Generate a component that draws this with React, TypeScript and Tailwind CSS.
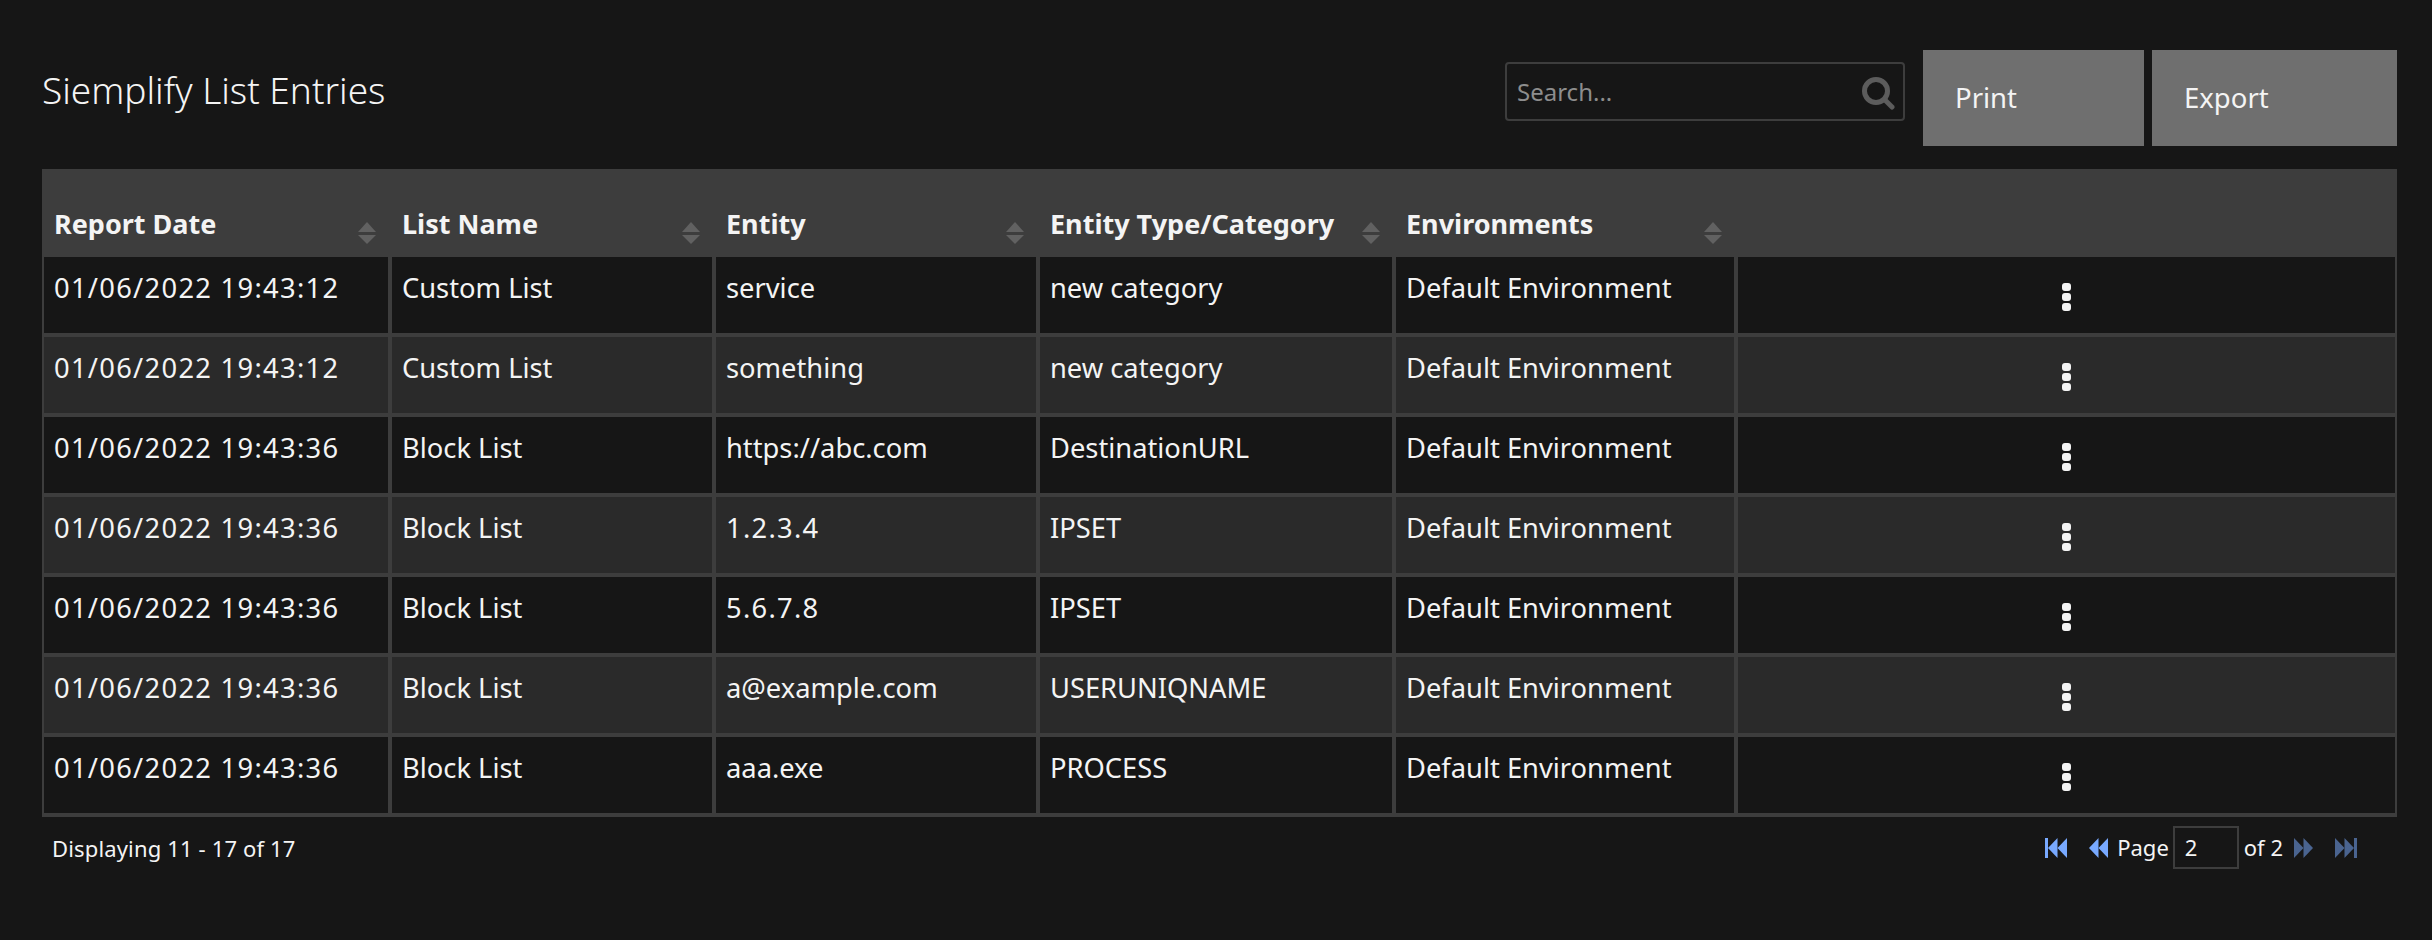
const font = "font-['Noto_Sans','Liberation_Sans',sans-serif]";

const rows = [
    ["01/06/2022 19:43:12", "Custom List", "service", "new category"],
    ["01/06/2022 19:43:12", "Custom List", "something", "new category"],
    ["01/06/2022 19:43:36", "Block List", "https://abc.com", "DestinationURL"],
    ["01/06/2022 19:43:36", "Block List", "1.2.3.4", "IPSET"],
    ["01/06/2022 19:43:36", "Block List", "5.6.7.8", "IPSET"],
    ["01/06/2022 19:43:36", "Block List", "a@example.com", "USERUNIQNAME"],
    ["01/06/2022 19:43:36", "Block List", "aaa.exe", "PROCESS"],
];

const SortIcon = () => (
    <svg width="18" height="22" viewBox="0 0 18 22" className="shrink-0">
        <path d="M9 0 L18 10 L0 10 Z" fill="#616161" />
        <path d="M0 13 L18 13 L9 22 Z" fill="#616161" />
    </svg>
);

const SearchIcon = () => (
    <svg width="36" height="36" viewBox="0 0 36 36" fill="none" stroke="#5c5c5c" strokeWidth="5" strokeLinecap="round" className="shrink-0">
        <circle cx="15" cy="17" r="11.5" />
        <path d="M24 26 L31 33" />
    </svg>
);

const Header = ({ label, width }: { label: string; width: string }) => (
    <th className={`${width} h-[86px] p-0 align-bottom`}>
        <div className="flex items-end justify-between pr-[14px] pb-[11px] pl-3">
            <span className="mb-[1px] text-[27px] leading-[38px] font-bold text-[#f4f4f4]">{label}</span>
            <SortIcon />
        </div>
    </th>
);

const Kebab = () => (
    <span className="flex flex-col items-center gap-[2px]">
        <span className="h-[8px] w-[9px] rounded-[3px] bg-[#f4f4f4]" />
        <span className="h-[8px] w-[9px] rounded-[3px] bg-[#f4f4f4]" />
        <span className="h-[8px] w-[9px] rounded-[3px] bg-[#f4f4f4]" />
    </span>
);

const Skip = ({ dir, bar, dim }: { dir: "left" | "right"; bar?: boolean; dim?: boolean }) => (
    <svg
        width={bar ? 22 : 19}
        height="20"
        viewBox={bar ? "0 0 22 20" : "3 0 19 20"}
        fill={dim ? "#4a6490" : "#78a9ff"}
        className={dir === "right" ? "-scale-x-100" : ""}
    >
        {bar && <rect x="0" y="0" width="3" height="20" />}
        <path d="M3 10 L12.5 0 V20 Z" />
        <path d="M12.5 10 L22 0 V20 Z" />
    </svg>
);

export default function App() {
    return (
        <div className={`${font} h-[940px] w-[2432px] bg-[#161616] pr-[35px] pl-[42px] text-[#f4f4f4]`}>
            <div className="flex h-[169px] items-start justify-between">
                <h1 className="mt-[65px] text-[37px] leading-[50px] font-light">Siemplify List Entries</h1>
                <div className="mt-[50px] flex items-start">
                    <div className="mt-[12px] flex h-[59px] w-[400px] items-center justify-between rounded-[4px] border-2 border-[#3d3d3d] pr-[6px] pl-[10px]">
                        <span className="text-[24px] text-[#8d8d8d]">Search...</span>
                        <SearchIcon />
                    </div>
                    <button className="ml-[18px] flex h-[96px] w-[221px] items-center bg-[#6f6f6f] pl-[32px] text-[27.5px]">Print</button>
                    <button className="ml-[8px] flex h-[96px] w-[245px] items-center bg-[#6f6f6f] pl-[32px] text-[27.5px]">Export</button>
                </div>
            </div>
            <table className="w-[2355px] table-fixed border-separate border-spacing-0 border-b-2 border-[#3d3d3d]">
                <thead className="bg-[#3d3d3d]">
                    <tr>
                        <Header label="Report Date" width="w-[348px]" />
                        <Header label="List Name" width="w-[324px]" />
                        <Header label="Entity" width="w-[324px]" />
                        <Header label="Entity Type/Category" width="w-[356px]" />
                        <Header label="Environments" width="w-[342px]" />
                        <th className="h-[86px] p-0" />
                    </tr>
                </thead>
                <tbody>
                    {rows.map((row, i) => (
                        <tr key={i} className={i % 2 === 1 ? "bg-[#2a2a2a]" : "bg-[#161616]"}>
                            {[...row, "Default Environment"].map((cell, j) => (
                                <td
                                    key={j}
                                    className={`h-[80px] border-2 border-[#3d3d3d] py-0 pr-2 pb-[14px] pl-[10px] align-middle text-[27.3px] leading-[38px] whitespace-nowrap ${
                                        /^[\d./: ]+$/.test(cell) ? "tracking-[1.3px]" : ""
                                    }`}
                                >
                                    {cell}
                                </td>
                            ))}
                            <td className="h-[80px] border-2 border-[#3d3d3d] p-0 pt-[3px] align-middle">
                                <div className="flex justify-center">
                                    <Kebab />
                                </div>
                            </td>
                        </tr>
                    ))}
                </tbody>
            </table>
            <div className="flex items-center justify-between pt-[9px] pr-[40px] pl-[10px] text-[22px]">
                <span className="mt-[2px] tracking-[0.15px]">Displaying 11 - 17 of 17</span>
                <div className="flex items-center">
                    <Skip dir="left" bar />
                    <span className="ml-[22px]">
                        <Skip dir="left" />
                    </span>
                    <span className="ml-[9px]">Page</span>
                    <span className="mr-[5px] ml-[4px] flex h-[43px] w-[66px] items-center border-2 border-[#3d3d3d] pl-[10px]">2</span>
                    <span>of 2</span>
                    <span className="ml-[11px]">
                        <Skip dir="right" dim />
                    </span>
                    <span className="ml-[22px]">
                        <Skip dir="right" bar dim />
                    </span>
                </div>
            </div>
        </div>
    );
}
